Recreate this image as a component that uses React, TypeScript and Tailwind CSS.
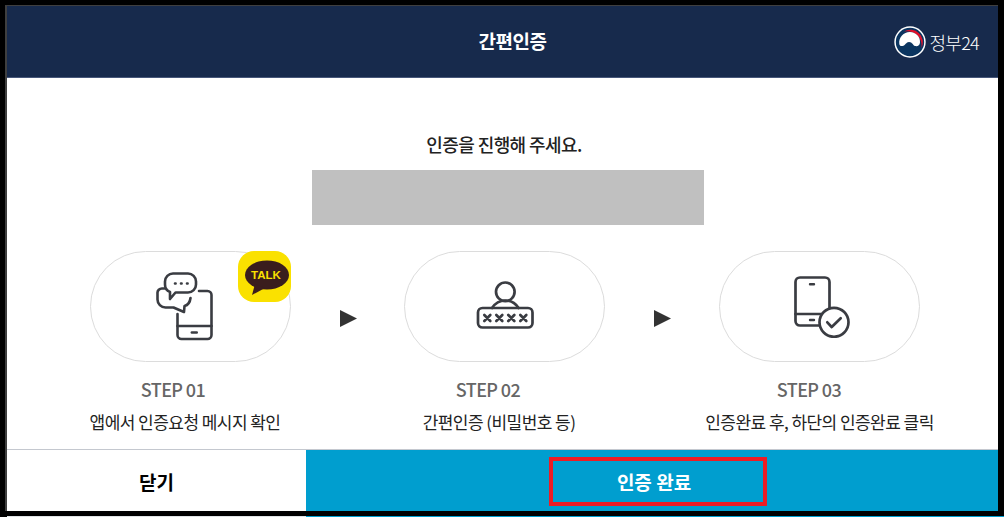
import React from "react";

const font = { fontFamily: '"Noto Sans CJK KR", "Noto Sans", sans-serif' };
const S = "#3a3c42";

function Chat() {
  return (
    <svg width="57" height="69" viewBox="155 271 57 69" fill="none" stroke={S} strokeWidth="2.6" strokeLinejoin="round" strokeLinecap="round" className="mr-[12px]">
      <path d="M198 290h8.500a4 4 0 0 1 4 4v40a4 4 0 0 1-4 4h-26a4 4 0 0 1-4-4v-21" />
      <path d="M176.500 325h34" />
      <path d="M190.800 331.500h5" strokeWidth="2.400" />
      <path d="M163.500 287.500h-2a4.500 4.500 0 0 0-5 5v6a8 8 0 0 0 8 8h8l10.500 4.500 .5-6c3.500-1 5.500-3.500 6-8" fill="#fff" />
      <path d="M172 272.500h15a8 8 0 0 1 8 8v3a8 8 0 0 1-8 8h-12.500l-5.500 6.500v-7a8 8 0 0 1-5-7.500v-3a8 8 0 0 1 8-8z" fill="#fff" />
      <path d="M174 282.500h.6M180 282.500h.6M186 282.500h.6" strokeWidth="2.600" />
    </svg>
  );
}

function Password() {
  return (
    <svg width="58" height="58" viewBox="476 282 58 58" fill="none" stroke={S} strokeWidth="2.7" strokeLinejoin="round" strokeLinecap="round" className="mt-[6px]">
      <circle cx="505.300" cy="292.800" r="9.300" />
      <path d="M492 309c3-4.500 7.500-7.500 13.300-7.500s10.300 3 13.300 7.500" />
      <rect x="478" y="309" width="54.500" height="19.500" rx="4.500" />
      {[487.3, 499.3, 511.3, 523.3].map((x) => (
        <path key={x} d="M-3-3L3 3M3-3L-3 3" transform={`translate(${x} 319)`} />
      ))}
    </svg>
  );
}

function PhoneCheck() {
  return (
    <svg width="56" height="62" viewBox="795 276 56 62" fill="none" stroke={S} strokeWidth="2.7" strokeLinejoin="round" strokeLinecap="round" className="mt-[1px] ml-[4px]">
      <rect x="796.500" y="277.500" width="34" height="48" rx="4.500" />
      <path d="M796.500 314h32" />
      <path d="M811 284.300h4M811 320h4" strokeWidth="2.400" />
      <circle cx="835" cy="322.300" r="14.500" fill="#fff" />
      <path d="M828.300 322.300l4.400 4.700 9-8.700" />
    </svg>
  );
}

function Logo() {
  return (
    <svg width="32" height="32" viewBox="0 0 32 32">
      <circle cx="16" cy="16" r="15.700" fill="#fff" />
      <circle cx="16" cy="16" r="14.200" fill="#0b3560" />
      <path d="M10 5.500 A12.500 12.500 0 0 1 27.500 22 A14.500 14.500 0 0 0 10 5.500 z" fill="#e0112b" />
      <path d="M5.300 18C4.500 11 10 5.800 16 6c6 .2 10.500 5 10 10.500-.3 3.200-2.500 4-5 3.500-2-.5-2.500-4-6-4-3 0-3.500 3.500-6.500 4-2 .3-3-.5-3.200-2z" fill="#fff" />
    </svg>
  );
}

function StepHead({ pad, children }: { pad: string; children: React.ReactNode }) {
  return (
    <div className={`mt-[15px] flex justify-center text-[18px] leading-[24px] font-medium text-[#666] tracking-[-0.6px] whitespace-nowrap ${pad}`}>{children}</div>
  );
}

function StepText({ pad, children }: { pad: string; children: React.ReactNode }) {
  return (
    <div className={`mt-[10px] flex justify-center text-[17px] leading-[22px] text-[#222] tracking-[-0.55px] whitespace-nowrap ${pad}`}>{children}</div>
  );
}

function Arrow({ w }: { w: string }) {
  return (
    <div className={`shrink-0 h-[111px] pt-[22px] flex items-center justify-center ${w}`}>
      <svg width="18" height="18" viewBox="0 0 18 18"><path d="M1 1 L18 9.500 L1 18 Z" fill="#333" /></svg>
    </div>
  );
}

export default function App() {
  return (
    <div style={font} className="w-[1004px] h-[517px] bg-black flex flex-col overflow-hidden">
      <div className="h-[5px] shrink-0" />
      <div className="flex h-[506px] shrink-0 pl-[5px] pr-[6px]">
        <div className="relative flex-1 flex flex-col bg-white border-l-2 border-t border-[#3f3f3f]">
          <header className="relative h-[72px] shrink-0 bg-[#172a4c] border-b border-[#47577a] flex items-center justify-center pl-[20px]">
            <h1 className="text-[19px] font-bold text-white tracking-[-0.5px]">간편인증</h1>
            <div className="absolute right-[19px] top-[20px] flex items-center gap-[3px]">
              <Logo />
              <span className="text-[18px] leading-none font-light text-white tracking-[-0.7px]">정부24</span>
            </div>
          </header>

          <main className="flex-1 flex flex-col min-h-0">
            <p className="mt-[53px] pl-[3px] text-center text-[18px] leading-[26px] font-medium text-[#222] tracking-[-0.6px]">인증을 진행해 주세요.</p>
            <div className="mt-[13px] ml-[305px] w-[392px] h-[55px] shrink-0 bg-[#c0c0c0]" />

            <div className="mt-[26px] pl-[83px] flex items-start">
              <div className="w-[201px] shrink-0">
                <div className="relative h-[111px] rounded-[56px] border border-[#dcdcdc] flex items-center justify-center">
                  <Chat />
                  <div className="absolute -right-px -top-px w-[53px] h-[51px] rounded-[16px] bg-[#fae100] flex items-center justify-center">
                    <svg width="46" height="36" viewBox="0 0 46 36" className="absolute left-[6px] top-[9px]">
                      <ellipse cx="23" cy="15" rx="22" ry="14.500" fill="#3a1d1d" />
                      <path d="M11 24 L8 35 L21 28 Z" fill="#3a1d1d" />
                    </svg>
                    <span className="relative -mt-[2px] ml-[3px] text-[11.500px] leading-none font-bold text-[#fae100]" style={{ fontFamily: '"Liberation Sans", sans-serif' }}>TALK</span>
                  </div>
                </div>
                <StepHead pad="pr-[35px]">STEP 01</StepHead>
                <StepText pad="pr-[11px]">앱에서 인증요청 메시지 확인</StepText>
              </div>

              <Arrow w="w-[113px]" />

              <div className="w-[201px] shrink-0">
                <div className="h-[111px] rounded-[56px] border border-[#dcdcdc] flex items-center justify-center">
                  <Password />
                </div>
                <StepHead pad="pr-[33px]">STEP 02</StepHead>
                <StepText pad="pr-[11px]">간편인증 (비밀번호 등)</StepText>
              </div>

              <Arrow w="w-[114px]" />

              <div className="w-[201px] shrink-0">
                <div className="h-[111px] rounded-[56px] border border-[#dcdcdc] flex items-center justify-center">
                  <PhoneCheck />
                </div>
                <StepHead pad="pr-[21px]">STEP 03</StepHead>
                <StepText pad="">인증완료 후, 하단의 인증완료 클릭</StepText>
              </div>
            </div>
          </main>

          <footer className="h-[62px] shrink-0 flex border-t border-[#c4c8cf]">
            <button className="w-[299px] shrink-0 bg-white text-[19px] font-bold text-black pt-[4px]">닫기</button>
            <button className="flex-1 bg-[#009ecf] text-[19px] font-bold text-white pl-[4px] pt-[4px]">인증 완료</button>
          </footer>
          <div className="absolute left-[542px] top-[451px] w-[218px] h-[49px] border-4 border-[#ed1c24]" />
        </div>
      </div>
      <div className="h-[5px] shrink-0" />
      <div className="h-px shrink-0 flex pl-[7px]">
        <div className="w-[299px] bg-[#dfe3e6]" />
        <div className="flex-1 bg-[#009ecf]" />
      </div>
    </div>
  );
}
